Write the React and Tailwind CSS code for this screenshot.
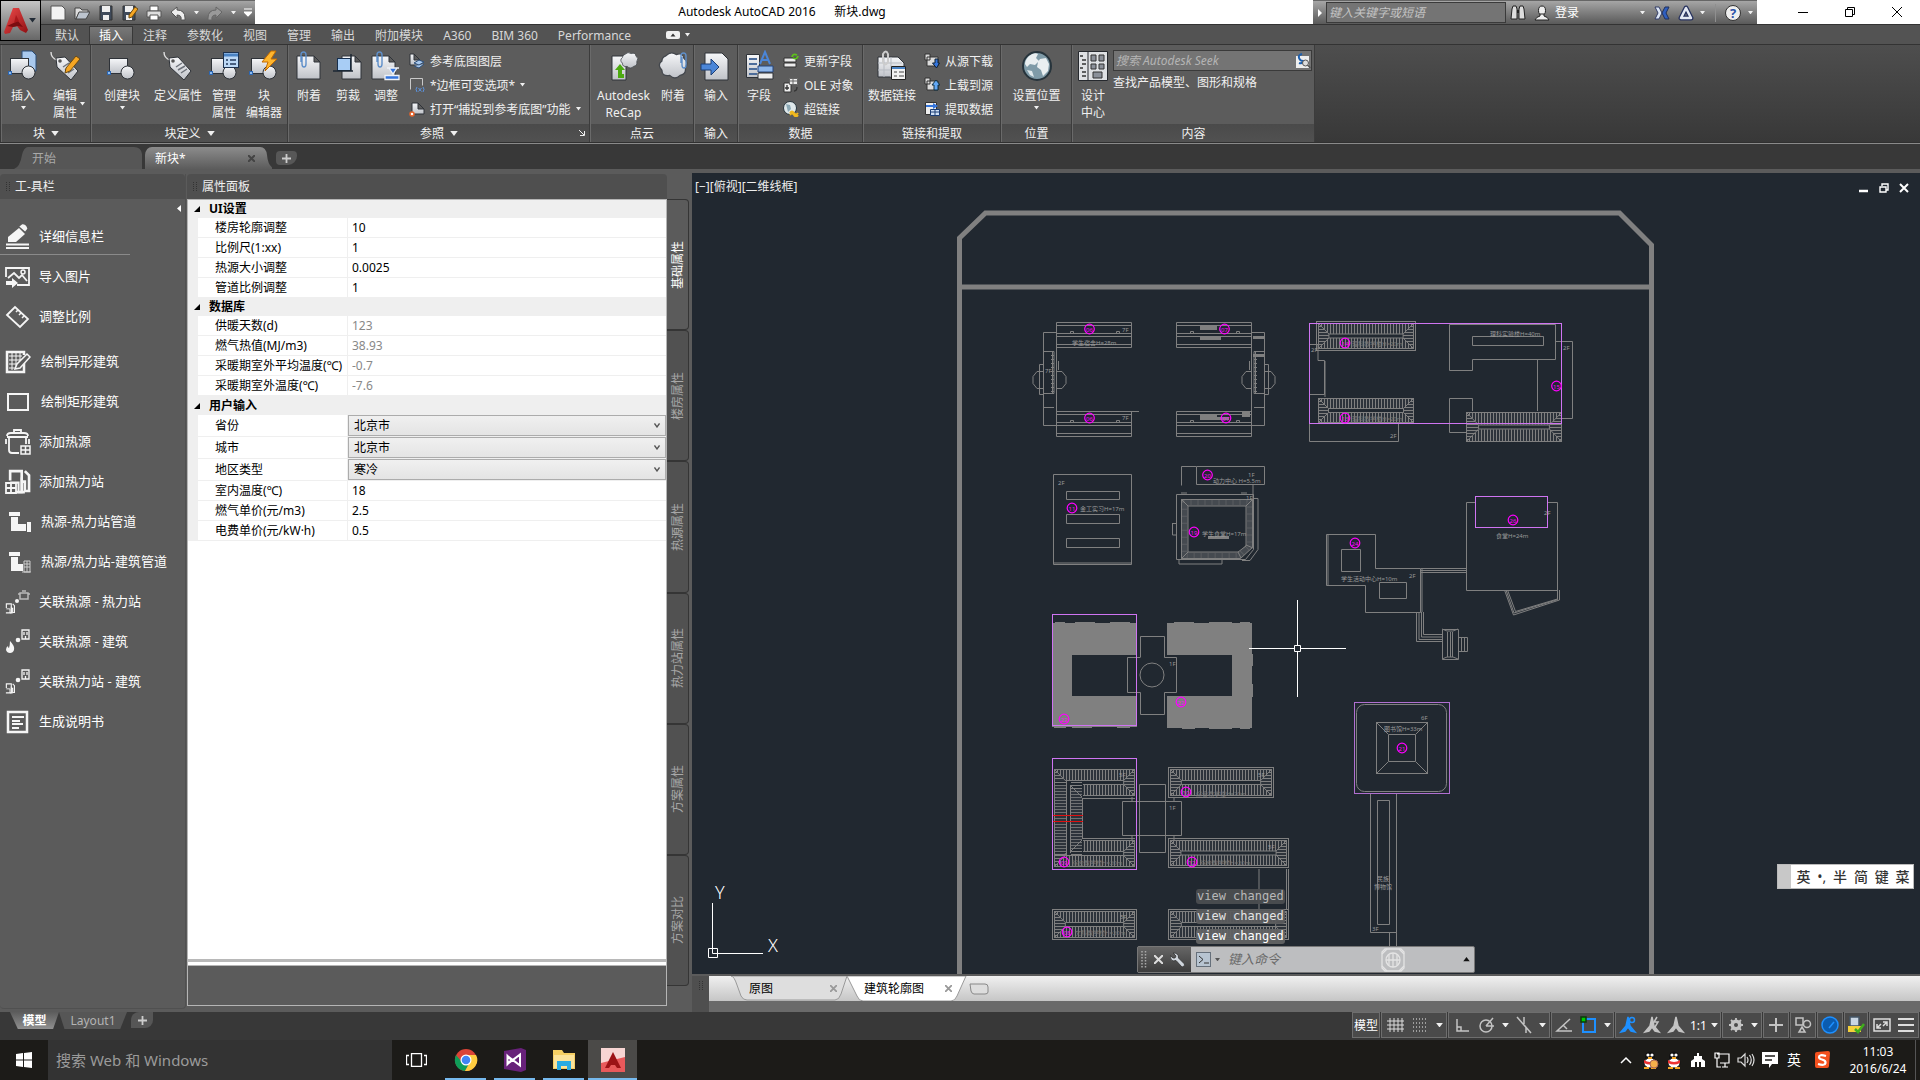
import React from "react";

/* ---------- small shared glyphs ---------- */
const Dn = ({ c = "#f0f0f0", w = 6 }) => (
  <svg width={w} height={w / 2 + 1} viewBox="0 0 6 4" className="shrink-0" aria-hidden="true">
    <path d="M0 0h6L3 4z" fill={c} />
  </svg>
);
const Svg = ({ s = 32, children, ...p }) => (
  <svg width={s} height={s} viewBox={`0 0 ${s} ${s}`} className="shrink-0" aria-hidden="true" {...p}>
    {children}
  </svg>
);
const PaleDefs = () => (
  <svg width="0" height="0" className="absolute" aria-hidden="true">
    <defs>
      <linearGradient id="pale" x1="0" y1="0" x2="0" y2="1">
        <stop offset="0" stopColor="#f6f7f9" />
        <stop offset="1" stopColor="#bfc2c8" />
      </linearGradient>
      <linearGradient id="red" x1="0" y1="0" x2="1" y2="1">
        <stop offset="0" stopColor="#ef4b4b" />
        <stop offset="1" stopColor="#8f0f12" />
      </linearGradient>
    </defs>
  </svg>
);
const Block = () => (
  <g stroke="#2e3238">
    <rect x="3.500" y="8.500" width="18" height="15" fill="url(#pale)" />
    <circle cx="21.500" cy="22.500" r="6.500" fill="url(#pale)" />
    <rect x="1.500" y="21.500" width="3" height="3" fill="#8dbbee" stroke="#2d66b0" />
  </g>
);
const Sheet = ({ x = 4, y = 6, w = 23, h = 23 }) => (
  <path
    d={`M${x} ${y}h${w - 6}l6 6v${h - 6}h${-w}z M${x + w - 6} ${y}v6h6`}
    fill="url(#pale)" stroke="#2e3238"
  />
);
const Clip = ({ x = 9, y = 2 }) => (
  <path
    d={`M${x} ${y + 4}v8q0 3 2 3t2-3V${y + 3}q0-3-2.500-3T${x - 1} ${y + 3}v7`}
    fill="none" stroke="#5f8fc9" strokeWidth="1.400"
  />
);
const Tag = () => (
  <g>
    <path d="M2 2q0 6 6 8" stroke="#ddd" fill="none" strokeWidth="1.400" />
    <path d="M7 8l9-1 13 14-7 9L8 17z" fill="url(#pale)" stroke="#2e3238" />
    <circle cx="11" cy="11" r="1.800" fill="#555" />
    <path d="M14 17l6-4M16 20l7-4M19 23l6-4" stroke="#6d727a" strokeWidth="1.500" />
  </g>
);
const Cloud = ({ x = 0, y = 0, k = 1 }) => (
  <path
    transform={`translate(${x} ${y}) scale(${k})`}
    d="M6 3q4-4 8-1q5-2 6 3q4 3 1 7q1 5-4 6q-4 4-8 0q-6 1-6-4q-4-4 0-7q0-3 3-4z"
    fill="url(#pale)" stroke="#43474d"
  />
);
const BI = {
  insert: <><path d="M15 1h10l4 4v16H15z" fill="#a9c9ee" stroke="#2d4e78" /><Block /></>,
  editAttr: <><Tag /><path d="M17 18l10-12 4 3-10 12-5 2z" fill="#f6a623" stroke="#6b4a10" /></>,
  create: <Block />,
  define: <Tag />,
  manage: <><Block /><rect x="15.500" y="2.500" width="15" height="15" fill="#bcd8f5" stroke="#1e3350" /><path d="M16 5h14" stroke="#4a83c4" strokeWidth="3" /><path d="M18 10h2M18 14h2M22 10h6M22 14h6" stroke="#22375a" strokeWidth="1.500" /></>,
  blockEd: <><Block /><path d="M23 1l-9 11h6l-3 9 12-12h-6l5-8z" fill="#ffb62e" stroke="#c26a00" /></>,
  attach: <><Sheet /><Clip /></>,
  cut: <><Sheet x={10} w={19} /><rect x="5.500" y="8.500" width="13" height="12" fill="#a8cdf5" stroke="#17304f" /><path d="M1 21h20M19 4v17" stroke="#1c2733" strokeWidth="1.500" /></>,
  adjust: <><Sheet x={2} /><Clip x={8} /><path d="M17 18h12M19 18h8l-4 6zM15 25.500h14v4H15z" fill="#3475dd" stroke="#eef2f8" strokeWidth="1.300" /></>,
  recap: <><path d="M4 6h14v24H4z" fill="url(#pale)" stroke="#2e3238" /><Cloud x={12} y={2} k={0.8} /><path d="M16 28h-6V20H7l5-6 5 6h-3v4h2z" fill="#4caa12" /></>,
  cloud: <><Cloud x={1} y={2} k={1.3} /><Clip x={25} y={3} /></>,
  imp: <><path d="M5 3h17l6 6v21H5z" fill="url(#pale)" stroke="#2e3238" /><path d="M1 14h10v-5l8 8-8 8v-5H1z" fill="#4b86d8" stroke="#1c3e74" /></>,
  field: <><path d="M3.500 4.500h13v23h-13z" fill="url(#pale)" stroke="#2e3238" /><path d="M6 9h8M6 14h8M6 19h8M6 24h8" stroke="#4d6d9b" strokeWidth="2" /><path d="M17 14l5-12 5 12M19 10h6" stroke="#4b86d8" fill="none" strokeWidth="2" /><path d="M15 16h15v6H15z" fill="#8db6ea" stroke="#24457c" /><path d="M15 23h15v6H15z" fill="#eee" stroke="#2e3238" /></>,
  link: <><path d="M2 7h20l6 6v14H2z" fill="url(#pale)" stroke="#2e3238" /><path d="M2 13h24M2 20h24M8 7v20M15 7v20" stroke="#b7bbc2" /><path d="M7 4q3-5 5 0v8q-3 5-5 0z" fill="none" stroke="#ccc" strokeWidth="2" /><path d="M15.500 16.500h14v13h-14z" fill="#f2f2f2" stroke="#222" /><path d="M16 18h13" stroke="#4a83c4" strokeWidth="2" /><path d="M18 22h3M18 26h3M23 22h5M23 26h5" stroke="#444" /></>,
  globe: <><circle cx="16" cy="16" r="14" fill="#7f9ba8" stroke="#27343c" strokeWidth="2" /><path d="M8 6q5-4 9-2l-2 4 3 3-4 4-5-1-3 3-2-3q0-4 4-8zM19 9l6-1 3 6-1 7-5 5-2-6-4-3 1-5z" fill="#e9eff1" /><path d="M6 20l5 1 2 6-4-2z" fill="#dfe8eb" /></>,
  design: <><path d="M1.500 1.500h29v29h-29z" fill="#dfe1e4" stroke="#26292e" /><path d="M11 2v28" stroke="#26292e" /><path d="M3 6h3M5 10h4M5 14h4M3 18h3M5 22h4M5 26h4" stroke="#333" strokeWidth="1.500" /><path d="M14 5h5v6h-5zM22 5h5v6h-5zM14 14h5v5h-5zM22 14h5v5h-5zM16 22h9v6h-9z" fill="#8b9099" stroke="#333" /></>,
};
const SI = {
  layers: <><Sheet x={1} y={1} w={10} h={11} /><path d="M5 10l5-3 5 2-5 3zM5 13l5 2 5-4" fill="#a9c9ee" stroke="#2d4e78" /></>,
  frame: <><path d="M1.500 12.500v-11h12v7" fill="none" stroke="#c9c9c9" /><path d="M8 10q-2 2 0 5M14 10q2 2 0 5M9.500 11l3 3.500M12.500 11l-3 3.500" fill="none" stroke="#5b93e0" /></>,
  snap: <><Sheet x={3} y={2} w={12} h={11} /><circle cx="3" cy="13" r="2" fill="#fff" stroke="#e8632a" strokeWidth="1.500" /></>,
  update: <><path d="M1 5h12v4H1zM1 10h12v4H1z" fill="#ececec" stroke="#333" /><path d="M9 4q1-4 5-2M15 3q-1 4-5 2" stroke="#5cc21a" fill="none" strokeWidth="1.800" /></>,
  ole: <><path d="M1 6h7v9H1z" fill="#eee" stroke="#333" /><path d="M6.500 1.500h8v6h-8zM6.500 4h8M10 2v5" fill="#eee" stroke="#666" /><path d="M4 8v5M2 11h4M11 14q3 0 3-4" stroke="#333" fill="none" strokeWidth="1.300" /></>,
  hyper: <><circle cx="7" cy="7" r="6.500" fill="#dfe8eb" stroke="#27343c" /><path d="M3 3l4 1 1 4-3 3z" fill="#8ba8b5" /><path d="M7 12q2-3 4 0t4 0M7 14q2-3 4 0t4 0" stroke="#f0b81e" fill="none" strokeWidth="1.800" /></>,
  down: <><path d="M1 1h5v6H1zM3 4h11v9H3z" fill="#dcdcdc" stroke="#333" /><path d="M11 6v4H8.500l4 5 3-5H14V6z" fill="#3475dd" stroke="#123" /></>,
  up: <><path d="M1 1h5v6H1zM3 4h11v9H3z" fill="#dcdcdc" stroke="#333" /><path d="M10 13V8H8l4-5 4 5h-2v5z" fill="#62a8f5" stroke="#134" /></>,
  extract: <><path d="M1.500 1.500h11v12h-11z" fill="#eee" stroke="#333" /><path d="M6.500 8.500h9v6h-9zM6.500 11h9M11 9v6" fill="#cfe0f5" stroke="#1c3e74" /><path d="M2 4h7v-2l5 3-5 3v-2H2" fill="#3475dd" /></>,
};

/* ---------- ribbon ---------- */
const Big = ({ i, l1, l2, dd, w }) => (
  <button className={`flex flex-col items-center pt-[5px] ${w} relative shrink-0`}>
    <Svg>{BI[i]}</Svg>
    <span className="mt-[5px] leading-[17px] whitespace-nowrap text-center">
      {l1}
      {l2 && <><br />{l2}</>}
    </span>
    {dd && !l2 && <span className="mt-[2px]"><Dn w={5} /></span>}
    {dd && l2 && <span className="absolute right-[1px] top-[57px]"><Dn w={5} /></span>}
  </button>
);
const Small = ({ i, t, dd }) => (
  <button className="flex h-[24px] items-center gap-[5px] whitespace-nowrap">
    <Svg s={16}>{SI[i]}</Svg>{t}{dd && <Dn w={5} />}
  </button>
);
const Group = ({ name, dd, launch, w, children }) => (
  <section className={`flex flex-col border-r border-[#3c3c3c] border-l border-l-[#6a6a6a] bg-[#5c5c5c] ${w} shrink-0`}>
    <div className="flex flex-1 items-start">{children}</div>
    <div className="relative flex h-[18px] items-center justify-center gap-[6px] bg-linear-to-b from-[#4a4a4a] to-[#515151]">
      {name}{dd && <Dn w={8} />}
      {launch && (
        <svg width="6" height="6" viewBox="0 0 6 6" className="absolute right-[4px] top-[6px]"><path d="M0 0l5 5M5.500 1v4.500H1" stroke="#eee" fill="none" /></svg>
      )}
    </div>
  </section>
);
const Ribbon = () => (
  <div className="h-[99px] shrink-0 border-b border-[#8a8a8a] text-[12px] leading-[17px] text-[#f0f0f0]">
    <div className="flex h-full border-b border-[#303030] bg-linear-to-b from-[#4e4e4e] to-[#383838] pl-[1px]">
      <Group name="块" dd w="w-[90px]">
        <Big i="insert" l1="插入" dd w="w-[42px]" /><Big i="editAttr" l1="编辑" l2="属性" dd w="w-[42px]" />
      </Group>
      <Group name="块定义" dd w="w-[197px]">
        <Big i="create" l1="创建块" dd w="w-[60px]" /><Big i="define" l1="定义属性" w="w-[52px]" />
        <Big i="manage" l1="管理" l2="属性" w="w-[40px]" /><Big i="blockEd" l1="块" l2="编辑器" w="w-[40px]" />
      </Group>
      <Group name="参照" dd launch w="w-[302px]">
        <Big i="attach" l1="附着" w="w-[40px]" /><Big i="cut" l1="剪裁" w="w-[38px]" /><Big i="adjust" l1="调整" w="w-[38px]" />
        <div className="flex flex-col pt-[4px] pl-[4px]">
          <Small i="layers" t="参考底图图层" />
          <Small i="frame" t="*边框可变选项*" dd />
          <Small i="snap" t="打开“捕捉到参考底图”功能" dd />
        </div>
      </Group>
      <Group name="点云" w="w-[104px]">
        <Big i="recap" l1="Autodesk" l2="ReCap" w="w-[65px]" /><Big i="cloud" l1="附着" w="w-[34px]" />
      </Group>
      <Group name="输入" w="w-[44px]"><Big i="imp" l1="输入" w="w-[42px]" /></Group>
      <Group name="数据" w="w-[125px]">
        <Big i="field" l1="字段" w="w-[40px]" />
        <div className="flex flex-col pt-[4px] pl-[4px]">
          <Small i="update" t="更新字段" /><Small i="ole" t="OLE 对象" /><Small i="hyper" t="超链接" />
        </div>
      </Group>
      <Group name="链接和提取" w="w-[138px]">
        <Big i="link" l1="数据链接" w="w-[56px]" />
        <div className="flex flex-col pt-[4px] pl-[4px]">
          <Small i="down" t="从源下载" /><Small i="up" t="上载到源" /><Small i="extract" t="提取数据" />
        </div>
      </Group>
      <Group name="位置" w="w-[71px]"><Big i="globe" l1="设置位置" dd w="w-[69px]" /></Group>
      <Group name="内容" w="w-[243px]">
        <Big i="design" l1="设计" l2="中心" w="w-[40px]" />
        <div className="flex flex-1 flex-col gap-[3px] pt-[5px] pr-[2px]">
          <label className="flex h-[21px] items-center border border-[#3a3a3a] bg-[#747474]">
            <input aria-label="搜索 Autodesk Seek" placeholder="搜索 Autodesk Seek" className="min-w-0 flex-1 bg-transparent px-[2px] italic outline-none placeholder:text-[#b4b4b4]" />
            <Svg s={16}><path d="M1 3h13v12H1z" fill="#eee" /><path d="M7 1q-4 1-3 4t4 3q-1 3-4 2" stroke="#1d5fae" strokeWidth="2" fill="none" /><circle cx="10.500" cy="10" r="3" fill="#ddd" stroke="#555" /><path d="M12.500 12l3 3" stroke="#555" strokeWidth="1.500" /></Svg>
          </label>
          <span className="whitespace-nowrap">查找产品模型、图形和规格</span>
        </div>
      </Group>
    </div>
  </div>
);

/* ---------- title bar ---------- */
const Title = () => (
  <header className="flex h-[24px] shrink-0 items-stretch justify-between bg-white text-[12px] leading-[17px]">
    <div className="flex w-[255px] items-center gap-[8px] border-t border-[#666] bg-linear-to-b from-[#a6a6a6] to-[#5a5a5a] pl-[50px]">
      <Svg s={16}><path d="M1 1h11l3 3v11H1z" fill="#f2f2f2" stroke="#555" /></Svg>
      <Svg s={16}><path d="M1 3h5l2 2h6v3H5l-3 6H1z" fill="#ddd" stroke="#444" /><path d="M2 14l3-7h11l-4 7z" fill="#bcc4ce" stroke="#444" /></Svg>
      <Svg s={16}><path d="M2 1h12v14H2z" fill="#3f4a5a" stroke="#333" /><path d="M4 1h8v6H4zM5 10h6v5H5z" fill="#eee" /></Svg>
      <Svg s={16}><path d="M1 1h12v14H1z" fill="#3f4a5a" stroke="#333" /><path d="M3 1h8v6H3zM4 10h6v5H4z" fill="#eee" /><path d="M7 10l6-8 3 2-6 8-3 1z" fill="#f6a623" stroke="#6b4a10" /></Svg>
      <Svg s={16}><path d="M4 1h8v5H4z" fill="#fff" stroke="#555" /><path d="M1 6h14v6H1z" fill="#ddd" stroke="#555" /><path d="M4 10h8v5H4z" fill="#fff" stroke="#555" /></Svg>
      <Svg s={16}><path d="M1 7l6-5v3q8 0 8 8v2h-4q1-5-4-5v3z" fill="#eee" stroke="#555" /></Svg>
      <Dn w={5} />
      <Svg s={16}><path d="M15 7l-6-5v3q-8 0-8 8v2h4q-1-5 4-5v3z" fill="#999" stroke="#666" /></Svg>
      <Dn w={5} />
      <svg width="8" height="9" viewBox="0 0 8 9"><path d="M0 1h8M0 4h8L4 8z" fill="#fff" stroke="#fff" strokeWidth="1.200" /></svg>
    </div>
    <h1 className="pt-[3px] pr-[4px] font-normal text-black whitespace-pre">Autodesk AutoCAD 2016      新块.dwg</h1>
    <div className="flex">
      <div className="flex w-[444px] items-center border-t border-[#666] bg-linear-to-b from-[#a6a6a6] to-[#5a5a5a] text-white">
        <svg width="13" height="10" viewBox="0 0 13 10"><path d="M5 1v8l4-4z" fill="#fff" /></svg>
        <input aria-label="键入关键字或短语" placeholder="键入关键字或短语" className="h-[21px] w-[180px] border border-[#3a3a3a] bg-[#747474] px-[2px] italic outline-none placeholder:text-[#c4c4c4]" />
        <Svg s={16} className="ml-[4px]"><path d="M2 4l1-3h3l1 3v10H1zM9 4l1-3h3l1 3 1 10H9z" fill="#ddd" stroke="#222" /><path d="M7 5h2v3H7z" fill="#222" /></Svg>
        <Svg s={16} className="ml-[8px]"><ellipse cx="8" cy="5.500" rx="3.500" ry="4.500" fill="#eee" stroke="#222" /><path d="M1 15q1-3 5-4V9h4v2q4 1 5 4z" fill="#eee" stroke="#222" /></Svg>
        <button className="ml-[5px] flex w-[90px] items-center justify-between"><span>登录</span><Dn w={5} /></button>
        <Svg s={16} className="ml-[9px]"><path d="M1 2h4l3 6-3 6H1l3-6z" fill="#dde6f5" stroke="#333d66" /><path d="M15 2h-4L8 8l3 6h4l-3-6z" fill="#2f5fc0" stroke="#22305a" /></Svg>
        <Svg s={16} className="ml-[8px]"><path d="M8 3L3 13h10z" fill="none" stroke="#26315e" strokeWidth="5" strokeLinejoin="round" /><path d="M8 3L3 13h10z" fill="none" stroke="#e3e8f2" strokeWidth="2.500" strokeLinejoin="round" /></Svg>
        <span className="ml-[6px] flex"><Dn w={5} /></span>
        <span className="ml-[10px] h-[18px] w-px bg-[#8f8f8f]" />
        <Svg s={16} className="ml-[9px]"><circle cx="8" cy="8" r="7.500" fill="#eee" stroke="#333" /><text x="8" y="13" fontSize="13" fontWeight="bold" textAnchor="middle" fill="#2a52a8">?</text></Svg>
        <span className="ml-[7px] flex"><Dn w={5} /></span>
      </div>
      <div className="flex w-[163px] items-center justify-around pl-[22px]">
        <button aria-label="最小化"><Svg s={12}><path d="M1 6.500h10" stroke="#000" /></Svg></button>
        <button aria-label="还原"><Svg s={12}><path d="M1.500 3.500h7v7h-7zM3.500 3v-1.500h7v7H9" fill="none" stroke="#000" /></Svg></button>
        <button aria-label="关闭"><Svg s={12}><path d="M1 1l10 10M11 1L1 11" stroke="#000" /></Svg></button>
      </div>
    </div>
  </header>
);
const TABS = ["默认", "插入", "注释", "参数化", "视图", "管理", "输出", "附加模块", "A360", "BIM 360", "Performance"];
const RibbonTabs = () => (
  <nav className="flex h-[21px] shrink-0 items-end border-t border-b border-[#333] bg-[#535353] pl-[45px] text-[12px] leading-[17px] text-[#d8d8d8]">
    {TABS.map((t, i) => (
      <button key={t} className={i === 1 ? "h-[18px] border border-b-0 border-[#383838] bg-linear-to-b from-[#787878] to-[#606060] px-[9px] text-white" : "h-[18px] px-[10px]"}>{t}</button>
    ))}
    <button aria-label="最小化功能区" className="flex h-[18px] items-center gap-[5px] pl-[25px]">
      <svg width="14" height="8" viewBox="0 0 14 8"><rect width="14" height="8" rx="2" fill="#f0f0f0" /><path d="M4.500 5.500h5L7 2.500z" fill="#333" /></svg>
      <Dn w={5} />
    </button>
  </nav>
);
const AppButton = () => (
  <button aria-label="应用程序菜单" className="absolute left-0 top-0 flex h-[41px] w-[41px] items-center border border-black bg-linear-to-b from-[#c4c4c4] to-[#676767] pl-[3px]">
    <svg width="25" height="28" viewBox="0 0 25 28"><path d="M9 1h6l9 22-2 3-6-3-3-4-4 1-3 6-5 1-1-2z" fill="url(#red)" /><path d="M3 19l11-5 5 6-5-1-5 1z" fill="#7c0d10" /><path d="M12 8l3 6-5 2z" fill="#a9171b" /></svg>
    <Dn w={7} c="#222b36" />
  </button>
);

/* ---------- document tabs ---------- */
const DocTabs = () => (
  <div className="flex h-[25px] shrink-0 items-end bg-[#383838] pl-[14px] text-[12px] leading-[17px]">
    <button className="relative h-[22px] w-[131px] text-left text-[#a9a9a9]">
      <svg viewBox="0 0 131 22" preserveAspectRatio="none" className="absolute inset-0 h-full w-full"><path d="M0 22q6-2 8-14 2-8 6-8h106q7 0 8 7v15z" fill="#565656" /></svg>
      <span className="relative pl-[18px]">开始</span>
    </button>
    <div className="relative flex h-[22px] w-[127px] items-center justify-between text-white">
      <svg viewBox="0 0 127 22" preserveAspectRatio="none" className="absolute inset-0 h-full w-full">
        <defs><linearGradient id="tb" x1="0" y1="0" x2="0" y2="1"><stop offset="0" stopColor="#8c8c8c" /><stop offset="1" stopColor="#5c5c5c" /></linearGradient></defs>
        <path d="M-8 22q8-2 8-14 1-8 7-8h108q6 0 7 8 1 12 8 14z" fill="url(#tb)" />
      </svg>
      <button className="relative pl-[10px]">新块*</button>
      <button aria-label="关闭新块" className="relative mr-[17px]"><Svg s={7}><path d="M0 0l7 7M7 0L0 7" stroke="#444" strokeWidth="2" /></Svg></button>
    </div>
    <button aria-label="新图形" className="mb-[4px] ml-[4px] flex h-[14px] w-[21px] items-center justify-center rounded-br-[9px] rounded-tl-[4px] rounded-bl-[4px] rounded-tr-[4px] bg-[#575757]">
      <Svg s={9}><path d="M0 4.500h9M4.500 0v9" stroke="#ccc" strokeWidth="1.800" /></Svg>
    </button>
  </div>
);

/* ---------- left tool bar ---------- */
const W = "#f5f5f5";
const Pump = ({ x = 0, y = 0, k = 1 }) => (
  <g transform={`translate(${x} ${y}) scale(${k})`} fill="none" stroke={W} strokeWidth="2.500">
    <path d="M3 11V2h11v20M2 22h15" /><path d="M14 12h3v9h4V6l-4-4" /><path d="M14 8v14h-3v-9H3" strokeWidth="2" />
  </g>
);
const TOOLS = [
  ["详细信息栏", <><path d="M14 4l6 6-9 8H3v-5z" fill={W} /><path d="M15.500 2.500l2-1.500q3 0 4 3.500l-1.500 2z" fill={W} stroke={W} strokeWidth="1.500" /><path d="M1 20.500h23M1 24h23" stroke={W} strokeWidth="1.800" /></>],
  ["导入图片", <><path d="M1 13V4h23v17H12" fill="none" stroke={W} strokeWidth="1.800" /><path d="M3 14l6-5 5 5 3-3 5 6" fill="none" stroke={W} strokeWidth="1.800" /><circle cx="18" cy="8" r="2" fill="none" stroke={W} strokeWidth="1.500" /><path d="M1 17h6v-3l6 5-6 5v-3H1z" fill={W} /></>],
  ["调整比例", <><path d="M2 11l8-8 13 12-8 8z" fill="none" stroke={W} strokeWidth="1.800" /><path d="M13 6l-2 2M16 9l-2 2M19 12l-2 2" stroke={W} strokeWidth="1.500" /></>],
  ["绘制异形建筑", <><path d="M19 14v9H2V3h17v3" fill="none" stroke={W} strokeWidth="2.500" /><path d="M4 7h13M4 11h12M4 15h8M4 19h7M7 4v17M11 4v14M15 4v9" stroke={W} /><path d="M10 20l2-5L22 5l3 3-10 11z" fill="#5b5b5b" stroke={W} strokeWidth="1.500" /></>],
  ["绘制矩形建筑", <path d="M3 5h20v16H3z" fill="none" stroke={W} strokeWidth="2" />],
  ["添加热源", <><path d="M4 9v12q0 3 3 3h7M21 9v6M2 7q0-3 4-3h13q4 0 4 3M9 4V1h7v3M1 10v5M24 10v5M2 8h21" fill="none" stroke={W} strokeWidth="1.800" /><path d="M16 17h9v8h-9zM20.500 17v8M16 21h9" fill="none" stroke={W} strokeWidth="1.500" /></>],
  ["添加热力站", <><Pump x={2} y={0} k={1.05} /><path d="M1 14h10v10H1zM6 14v10M1 19h10" fill="#5b5b5b" stroke={W} strokeWidth="1.800" /></>],
  ["热源-热力站管道", <><path d="M4 3h11v4H4zM6 8h7v7h8v7H6zM22 13h4v10h-4z" fill={W} /></>],
  ["热源/热力站-建筑管道", <><path d="M4 3h11v4H4zM6 8h7v7h5v7H6z" fill={W} /><path d="M19 12h6v11h-6zM17 23h9M19 15h6M19 18h6M22 12v11" fill="none" stroke="#ccc" /></>],
  ["关联热源 - 热力站", <><path d="M15 4h8v6h-8zM17 2h4M13 5h2M23 5h2" fill="none" stroke="#bbb" strokeWidth="1.500" /><circle cx="12" cy="12" r="2" fill={W} /><Pump x={0} y={14} k={0.45} /></>],
  ["关联热源 - 建筑", <><path d="M17 1h7v9h-7zM19 3v3M22 3v3M20.500 7v3" fill="none" stroke={W} strokeWidth="1.300" /><circle cx="13" cy="11" r="2.300" fill={W} /><path d="M5 12q5 5 4 9-1 3-4 3t-4-3q0-3 2-4 0 2 1 2 1-3 1-7z" fill={W} /></>],
  ["关联热力站 - 建筑", <><path d="M17 1h7v9h-7zM19 3v3M22 3v3M20.500 7v3" fill="none" stroke={W} strokeWidth="1.300" /><circle cx="13" cy="11" r="2.300" fill={W} /><Pump x={0} y={14} k={0.45} /></>],
  ["生成说明书", <><path d="M3 3h19v20H3z" fill="none" stroke={W} strokeWidth="2.500" /><path d="M7 8h12M7 12h8M7 15h11M7 19h7" stroke={W} strokeWidth="1.800" /></>],
];
const Grip = () => (
  <svg width="4" height="10" viewBox="0 0 4 10" className="shrink-0"><path d="M.5 0v10M3.500 0v10" stroke="#333" strokeDasharray="1 1" /></svg>
);
const ToolPanel = () => (
  <aside className="mt-[5px] mb-[3px] flex w-[186px] shrink-0 flex-col rounded-b-[4px] border-b border-r border-[#505050]">
    <h2 className="flex h-[25px] items-center gap-[5px] rounded-t-[4px] bg-[#4f4f4f] pl-[6px] text-[12px] text-[#f0f0f0]"><Grip />工-具栏</h2>
    <div className="flex h-[18px] items-center justify-end pr-[4px]"><svg width="4" height="7" viewBox="0 0 4 7"><path d="M4 0v7L0 3.500z" fill="#fff" /></svg></div>
    {TOOLS.map(([t, g], i) => (
      <React.Fragment key={t}>
        {i === 3 && <div className="h-[5px]" />}
        <button className={`flex h-[40px] items-center pl-[5px] text-[13px] text-white whitespace-nowrap ${i === 3 || i === 4 || i === 7 || i === 8 ? "gap-[10px]" : "gap-[8px]"}`}>
          <Svg s={26}>{g}</Svg>{t}
        </button>
        {i === 0 && <div className="-mb-px -mt-[3px] mb-[2px] h-px w-[130px] bg-[#8a8a8a]" />}
      </React.Fragment>
    ))}
  </aside>
);

/* ---------- property panel ---------- */
const PROPS = [
  ["UI设置", [["楼房轮廓调整", "10"], ["比例尺(1:xx)", "1"], ["热源大小调整", "0.0025"], ["管道比例调整", "1"]]],
  ["数据库", [["供暖天数(d)", "123"], ["燃气热值(MJ/m3)", "38.93"], ["采暖期室外平均温度(℃)", "-0.7"], ["采暖期室外温度(℃)", "-7.6"]], true],
  ["用户输入", [["省份", "北京市", 1], ["城市", "北京市", 1], ["地区类型", "寒冷", 1], ["室内温度(℃)", "18"], ["燃气单价(元/m3)", "2.5"], ["电费单价(元/kW·h)", "0.5"]]],
];
const PropPanel = () => (
  <section className="mt-[5px] mb-[6px] flex w-[481px] shrink-0 flex-col pl-px">
    <h2 className="flex h-[25px] items-center gap-[5px] rounded-t-[4px] bg-[#4f4f4f] pl-[6px] text-[12px] text-[#f0f0f0]"><Grip />属性面板</h2>
    <div className="flex flex-1 flex-col border border-[#b5b5b5] bg-white">
      <div className="flex flex-col text-[12px] leading-[18px] text-black">
        {PROPS.map(([g, rows, ro], gi) => (
          <div key={g} className="bg-[#efefef]">
            <h3 className={`flex items-center gap-[9px] pl-[6px] font-bold ${gi === 2 ? "h-[19px]" : "h-[18px]"}`}>
              <svg width="6" height="6" viewBox="0 0 6 6"><path d="M6 0v6H0z" fill="#000" /></svg>{g}
            </h3>
            <div className="pl-[10px]">
              {rows.map(([k, v, sel]) => (
                <div key={k} className={`flex border-b border-[#efefef] bg-white ${sel ? "h-[22px]" : "h-[20px]"}`}>
                  <label htmlFor={k} className="flex w-[150px] items-center border-r border-[#efefef] pl-[17px] whitespace-nowrap">{k}</label>
                  {sel ? (
                    <div className="relative flex flex-1 items-center">
                      <select id={k} className="h-[21px] w-full appearance-none border border-[#acacac] bg-linear-to-b from-[#f0f0f0] to-[#e4e4e4] pl-[5px] leading-[18px]"><option>{v}</option></select>
                      <svg width="6" height="5" viewBox="0 0 6 5" className="absolute right-[6px]"><path d="M.5 .5L3 4 5.500 .5" fill="none" stroke="#555" strokeWidth="1.300" /></svg>
                    </div>
                  ) : (
                    <input id={k} defaultValue={v} readOnly={ro} className={`min-w-0 flex-1 bg-transparent pl-[4px] outline-none ${ro ? "text-[#888]" : "text-black"}`} />
                  )}
                </div>
              ))}
            </div>
          </div>
        ))}
      </div>
      <div className="flex-1" />
      <div className="h-[3px] bg-[#b8b8b8]" />
      <div className="h-[3px] bg-white" />
      <div className="h-[40px] border-t border-[#b5b5b5] bg-[#5b5b5b]" />
    </div>
  </section>
);
const VTABS = ["基础属性", "楼房属性", "热源属性", "热力站属性", "方案属性", "方案对比"];
const VTabs = () => (
  <div className="mt-[30px] mb-[26px] flex w-[22px] shrink-0 flex-col">
    {VTABS.map((t, i) => (
      <button key={t} className={`flex flex-1 items-center justify-center rounded-r-[4px] border border-l-0 border-[#353535] text-[12px] leading-[20px] ${i ? "bg-[#515151] text-[#a8a8a8]" : "bg-[#5b5b5b] text-white"}`}>
        <span className="rotate-180 [text-orientation:sideways] [writing-mode:vertical-rl]">{t}</span>
      </button>
    ))}
  </div>
);

/* ---------- drawing ---------- */
const G = "#808080";
const range = (a, b, s) => { const r = []; for (let v = a; v < b; v += s) r.push(v); return r; };
/* hipped roof seen from above, with its rafters */
const Roof = ({ x, y, w, h, frame = true }) => {
  const r = h * 0.42, my = y + h / 2;
  const d = [];
  range(x + 3, x + w - 1, 3).forEach((v) => {
    const k = Math.min(v - x, x + w - v, r);
    d.push(`M${v + 0.5} ${y}V${y + k}M${v + 0.5} ${y + h}V${y + h - k}`);
  });
  range(y + 3, y + h - 1, 3).forEach((v) => {
    const k = Math.min(v - y, y + h - v, r);
    d.push(`M${x} ${v + 0.5}H${x + k}M${x + w} ${v + 0.5}H${x + w - k}`);
  });
  return (
    <g>
      {frame && <rect x={x - 1.5} y={y - 1.5} width={w + 3} height={h + 3} />}
      <rect x={x + 0.5} y={y + 0.5} width={w - 1} height={h - 1} fill="#4a5055" fillOpacity="0.300" />
      <rect x={x + r} y={my - 2} width={w - 2 * r} height="4" fill="#212830" stroke="none" />
      <path d={d.join("")} />
      <path d={`M${x} ${y}L${x + r} ${my - 2}H${x + w - r}L${x + w} ${y}M${x} ${y + h}L${x + r} ${my + 2}H${x + w - r}L${x + w} ${y + h}M${x + r} ${my - 2}v4M${x + w - r} ${my - 2}v4`} />
    </g>
  );
};
const Mark = ({ x, y, n }) => (
  <g stroke="#f0f" strokeWidth="1.200"><circle cx={x} cy={y} r="4.800" /><text x={x} y={y + 2.5} fontSize="6" textAnchor="middle" fill="#f0f" stroke="none">{n}</text></g>
);
const T = ({ x, y, c = "#9a9a9a", children }) => <text x={x} y={y + 2.5} fontSize="6" fill={c} stroke="none">{children}</text>;
const Bar = ({ x, y }) => (
  <path d={`M${x} ${y}h75v25h-75zM${x} ${y + 3}h75M${x} ${y + 11}h75M${x} ${y + 14}h75M${x} ${y + 22}h75M${x + 14} ${y + 11}v-2h3v2M${x + 60} ${y + 11}v-2h3v2`} />
);
const Wing = () => (
  <g>
    <path d="M1056 332.500h-12.500v93h12.500M1056.500 346v66M1044 351.500h10v42h-10M1044 407.500h10M1052.500 351v42" />
    <path d="M1043 364.500h-3.500v30h3.500M1043 371.500h-6l-4 5v7l4 5h6M1057 371.500h5l4 5v7l-4 5h-5M1058.500 361v9" />
    <path d="M1052.500 351v42" strokeWidth="3" strokeDasharray="1 3" />
  </g>
);
const Plan = () => (
  <svg viewBox="692 173 1228 801" preserveAspectRatio="xMinYMin slice" className="absolute inset-0 h-full w-full" fill="none" stroke={G} strokeWidth="1">
    <path d="M959.500 976V238l26-25h634l32 32v731M961 287h690" strokeWidth="5" />
    {/* dormitories */}
    <Bar x={1056.5} y={322.5} /><Bar x={1176.5} y={322.5} /><Bar x={1056.5} y={411.5} /><Bar x={1176.5} y={411.5} />
    <Wing /><g transform="matrix(-1 0 0 1 2308 0)"><Wing /></g>
    <path d="M1131 411.500h8" />
    <path d="M1200 326h17v4h-17zM1200 337h21v3h-21zM1200 415h17v5h-17zM1217 417h12v3h-12zM1242 412h8v5h-8zM1253 336h11v3h-11zM1253 354h11v3h-11z" fill={G} stroke="none" />
    <Mark x={1089.5} y={329} n="06" /><Mark x={1224.5} y={329} n="07" /><Mark x={1089.5} y={418} n="06" /><Mark x={1226} y={418} n="07" />
    <T x={1122} y={329}>7F</T><T x={1122} y={417}>7F</T><T x={1045} y={370}>7F</T><T x={1072} y={342}>学生宿舍H=28m</T>
    {/* teaching complex */}
    <Roof x={1318} y={323} w={96} h={26} /><Roof x={1318} y={398} w={96} h={25} frame={false} /><Roof x={1466} y={412} w={96} h={30} frame={false} />
    <path d="M1309 344.500h9v16h6.500v34h-15M1325 361v36M1309.500 423v18.500h89V423M1449.500 370.500v-46h106v35h-83v11zM1472.500 336.500h71v9h-71zM1556 341.500h16.500v77H1562M1537.500 360v51M1472.500 411v-12.500h-23v34h17" />
    <T x={1311} y={349}>2F</T><T x={1390} y={435}>2F</T><T x={1563} y={347}>2F</T><T x={1490} y={333}>理科实验楼H=40m</T>
    <T x={1352} y={343} c="#777">理科教学楼H=20m</T><T x={1352} y={418} c="#777">理科教学楼H=20m</T>
    <rect x="1309.500" y="323.500" width="252" height="100" stroke="#cf74f2" />
    <Mark x={1345} y={343} n="14" /><Mark x={1345} y={418} n="13" /><Mark x={1556.500} y={386} n="15" />
    {/* workshop */}
    <path d="M1053.500 474.500h78v90h-78zM1053 563h79M1066.500 491.500h53v8h-53zM1066.500 514.500h53v9h-53zM1066.500 538.500h53v9h-53z" />
    <T x={1058} y={482}>2F</T><T x={1080} y={508}>金工实习H=17m</T><Mark x={1072} y={508} n="11" />
    {/* student canteen */}
    <path d="M1196.500 466.500h68v18h-68zM1196 466.500h-14.500v19M1176.500 494.500h77v55l-8 10h-69zM1253 485v14M1172 523.500h4M1172.500 523v12h4M1254 498.500h4v51l-8 11h-8M1179 559v5h43v-5M1181 493h6M1241 493h6" />
    <path d="M1184.500 502.500h65v43l-10 10h-55z" strokeWidth="6" strokeOpacity="0.600" />
    <path d="M1184.500 502.500h65v43l-10 10h-55z" stroke="#454a50" strokeWidth="5" strokeDasharray="6 1" />
    <path d="M1181.500 499.500h71v48l-12 11h-59zM1188 506h58v40l-8 6h-50zM1181 499l7 7M1253 499l-7 7M1181 559l7-7M1241 558l-3-6M1253 548l-7-3" />
    <path d="M1208 536h21v3h-21z" fill={G} stroke="none" />
    <T x={1248} y={474}>1F</T><T x={1213} y={480}>动力中心 H=5.5m</T><T x={1202} y={533}>学生食堂H=17m</T><T x={1246} y={497}>1F</T>
    <Mark x={1207.5} y={475} n="20" /><Mark x={1194} y={532} n="19" />
    {/* canteen and activity centre */}
    <path d="M1475 502.500h-8.500v88h91v-88h-10M1504.500 590l9 25 46-15v-10M1507.500 590l8 21.500 42-12.500v-9M1506 590l8 23 44-13.500" />
    <rect x="1475.500" y="496.500" width="72" height="31" stroke="#cf74f2" />
    <T x={1496} y={535}>食堂H=24m</T><T x={1544} y={512}>2F</T><Mark x={1513} y={520} n="26" />
    <path d="M1326.500 534.500h49v34h45v44h-55v-27h-39zM1328 535v50M1422 568v44M1341.500 549.500h19v22h-19zM1379.500 582.500h27v16h-27zM1421 568.500h45M1421 570.500h45M1421 572.500h45M1416.500 612v29.500h26M1419 612v27.500h23M1421.500 612v25h21M1423.500 612v22.500h19M1442.500 629.500h16v30h-16zM1447.500 632v25M1450.500 632v25M1452.500 632v25M1442 629l5 2h6l5-2M1442 659l5-2h6l5 2M1458.500 637.500h9v14h-9zM1461.500 638v13M1464.500 638v13" />
    <T x={1341} y={578}>学生活动中心H=10m</T><T x={1409} y={575}>2F</T><Mark x={1355} y={543} n="24" />
    {/* library */}
    <rect x="1356.500" y="704.500" width="90" height="87" rx="8" />
    <path d="M1376.500 722.500h51v51h-51zM1388.500 734.500h27v27h-27zM1376 722l12 12M1428 722l-12 12M1376 774l12-12M1428 774l-12-12M1370.500 793v139.500h26V793M1377.500 800.500h12v124h-12zM1389.500 932v18M1396.500 932v18" />
    <rect x="1354.500" y="702.500" width="95" height="91" stroke="#b06fd0" />
    <T x={1384} y={728}>图书馆H=33m</T><T x={1421} y={717}>6F</T><Mark x={1402} y={748} n="21" />
    <T x={1377} y={878}>民族</T><T x={1374} y={886}>博物馆</T><T x={1372} y={928}>3F</T>
    {/* paired halls */}
    <path d="M1052 623h3v-1h10v1h10v-1h20v1h15v-1h20v1h7v32h-65v41h65v31h-7v1h-13v-1h-25v1h-20v-1h-6v1h-12v-1h-2z" fill={G} stroke="none" />
    <path d="M1167 623h7v-1h20v1h15v-1h23v1h8v-1h10v1h2v31h1v12h-1v18h1v13h-1v31h-2v1h-10v-1h-8v1h-23v-1h-14v1h-13v-1h-15v-32h65v-41h-65z" fill={G} stroke="none" />
    <path d="M1140.500 657v-20.500h24V657.500h12v35h-12v22h-24v-22h-13v-35h13" /><circle cx="1152" cy="675" r="12" />
    <T x={1169} y={663}>1F</T>
    <rect x="1052.500" y="614.500" width="84" height="111" stroke="#cf74f2" />
    <Mark x={1064} y={719} n="22" /><Mark x={1181} y={702} n="22" />
    {/* lower halls */}
    <Roof x={1054} y={769} w={81} h={27} frame={false} /><Roof x={1054} y={840} w={81} h={27} frame={false} />
    <rect x="1054" y="781" width="29" height="72" fill="#212830" stroke="none" />
    <path d={range(782.5, 855, 3).map((v) => `M1054 ${v}h12M1071 ${v}h11`).join("")} />
    <path d="M1054 785h12v67h-12zM1071 789h11v60h-11z" fill="#4a5055" fillOpacity="0.300" stroke="none" />
    <path d="M1054.500 769v98M1066.500 781v74M1070.500 785v68M1082.500 798v41M1083 798.500h52M1083 838.500h52M1070 785l12 12M1070 852l12-12" />
    <Roof x={1170} y={769} w={102} h={27} /><Roof x={1170} y={840} w={117} h={26} /><Roof x={1054} y={911} w={81} h={27} /><Roof x={1170} y={911} w={117} h={27} />
    <path d="M1139.500 784.500h26v68h-26zM1122.500 801.500h59v34h-59zM1259 869v40M1286.500 869v40M1288.500 869v40M1132 801v-4M1174 801v-4M1132 836v4M1174 836v4" />
    <path d="M1053 815.500h30M1053 821.500h30" stroke="#e01010" />
    <rect x="1052.500" y="758.500" width="84" height="111" stroke="#cf74f2" />
    <T x={1169} y={807}>1F</T><T x={1119} y={774}>5F</T><T x={1258} y={774}>5F</T><T x={1268} y={846}>5F</T><T x={1120} y={916}>5F</T>
    <T x={1196} y={793} c="#777">综合教学楼H=20m</T><T x={1072} y={862} c="#777">综合教学楼H=20m</T><T x={1200} y={862} c="#777">综合教学楼H=20m</T><T x={1075} y={932} c="#777">文科教学楼H=20m</T>
    <Mark x={1186} y={792} n="10" /><Mark x={1064} y={862} n="09" /><Mark x={1192} y={862} n="12" /><Mark x={1067} y={932} n="08" />
    {/* crosshair and axis marker */}
    <g stroke="#fff"><path d="M1249 648.500h45M1301 648.500h45M1297.500 600v45M1297.500 652v45M1294.500 645.500h6v6h-6z" /></g>
    <g stroke="#fff"><path d="M708.500 948.500h9v9h-9zM712.500 903v50.500H763" /></g>
    <text x="715" y="899" fontSize="18" fontWeight="300" fill="#fff" stroke="none">Y</text>
    <text x="768" y="952" fontSize="18" fontWeight="300" fill="#fff" stroke="none">X</text>
  </svg>
);
const MSG = ["text-[#b8b8b8] bg-[#4b4d50]/95", "text-[#e4e4e4] bg-[#5a5b5d]/95", "text-white bg-[#626364]/95"];
const CanvasArea = () => (
  <main className="mt-[4px] ml-[3px] flex min-w-0 flex-1 flex-col">
    <div className="relative flex-1 overflow-hidden bg-[#212830]">
      <Plan />
      <div className="relative flex items-start justify-between pt-[5px] pl-[3px] pr-[11px] text-[12px] leading-[17px] text-[#eee]">
        <span>[−][俯视][二维线框]</span>
        <span className="flex gap-[10px] pt-[5px]">
          <Svg s={10}><path d="M0 8h9" stroke="#fff" strokeWidth="2.500" /></Svg>
          <Svg s={10}><path d="M1 4h6v5H1zM3 3V1h6v6H7" fill="none" stroke="#fff" strokeWidth="1.400" /></Svg>
          <Svg s={10}><path d="M1 1l8 8M9 1L1 9" stroke="#fff" strokeWidth="2" /></Svg>
        </span>
      </div>
      <div className="absolute bottom-[30px] left-[504px] flex flex-col gap-[5px] font-['DejaVu_Sans_Mono',monospace] text-[12px] leading-[15px]">
        {MSG.map((c) => <span key={c} className={`rounded-[3px] px-[1px] ${c}`}>view changed</span>)}
      </div>
      <form className="absolute bottom-[1px] left-[445px] flex h-[27px] w-[338px] items-center rounded-[2px] border border-[#777] bg-[#bdbec0] text-[12px]" onSubmit={(e) => e.preventDefault()}>
        <div className="flex h-full w-[53px] items-center gap-[7px] bg-linear-to-b from-[#666] to-[#3c3c3c] pl-[3px]">
          <svg width="6" height="17" viewBox="0 0 6 17"><path d="M1 0v17M4.500 0v17" stroke="#aaa" strokeWidth="1.500" strokeDasharray="1.500 1.500" /></svg>
          <Svg s={9}><path d="M0 0l9 9M9 0L0 9" stroke="#ddd" strokeWidth="2" /></Svg>
          <Svg s={16}><path d="M3 1l3 3-1 2-2 0-2.500-2.500Q0 8 3 9l3-.5 6 6.500q3 0 2.500-3L8.500 6Q9 1 3 1z" fill="#cfd5dc" stroke="#333" strokeWidth="0.800" /></Svg>
        </div>
        <button type="button" aria-label="最近使用的命令" className="flex items-center gap-[4px] pl-[5px]">
          <Svg s={15}><rect x=".5" y=".5" width="14" height="14" fill="#b7c4d1" stroke="#66707b" /><path d="M3 4l4 3.500L3 11M8 11h5" stroke="#333" fill="none" /></Svg><Dn c="#555" w={5} />
        </button>
        <input aria-label="键入命令" placeholder="键入命令" className="ml-[8px] min-w-0 flex-1 bg-transparent text-[13px] italic outline-none placeholder:text-[#6a6a6a]" />
        <svg width="24" height="24" viewBox="0 0 24 24" className="absolute left-[243px]" fill="none" stroke="#e4e4e4" strokeWidth="1.300"><path d="M4 1h16l3 3v16l-3 3H4l-3-3V4z" /><circle cx="12" cy="12" r="7" /><path d="M5 12h14M12 5v14M8 7v10M16 7v10M1 6l5-5M18 1l5 5M1 18l5 5M18 23l5-5" /></svg>
        <span className="mr-[4px] rotate-180"><Dn c="#111" w={7} /></span>
      </form>
      <div className="absolute right-[6px] top-[691px] flex h-[25px] w-[137px] items-center border border-[#bbb] bg-white text-[14px] text-[#333]">
        <span className="h-full w-[13px] bg-[#c8c8c8]" />
        <span className="flex flex-1 items-center justify-around pl-[2px]"><b className="font-medium">英</b><span>•,</span><b className="font-medium">半</b><b className="font-medium">简</b><b className="font-medium">键</b><b className="font-medium">菜</b></span>
      </div>
    </div>
    <div className="mt-[2px] flex h-[36px] shrink-0">
      <div className="flex w-[17px] justify-center bg-[#4f4f4f] pt-[5px]"><Grip /></div>
      <div className="flex flex-1 flex-col bg-[#6a6a6a]">
        <div className="flex h-[25px] items-stretch bg-linear-to-b from-[#f0f0f0] to-[#c6c6c6] pl-[22px] text-[12px] leading-[17px] text-black">
          <div className="relative flex w-[116px] items-center justify-between pl-[18px] pr-[10px]">
            <svg viewBox="0 0 116 25" preserveAspectRatio="none" className="absolute inset-0 h-full w-full"><path d="M0 0q3 0 6 9l4 11q2 4 6 4h88q4 0 6-6l6-18z" fill="#dedede" stroke="#999" /></svg>
            <button className="relative">原图</button>
            <button aria-label="关闭原图" className="relative"><Svg s={7}><path d="M0 0l7 7M7 0L0 7" stroke="#999" strokeWidth="1.800" /></Svg></button>
          </div>
          <div className="relative flex w-[120px] items-center justify-between pl-[17px] pr-[15px]">
            <svg viewBox="0 0 120 25" preserveAspectRatio="none" className="absolute inset-0 h-full w-full"><path d="M0 0l10 20q2 5 6 5h88q4 0 6-5l9-20z" fill="#fff" stroke="#999" /></svg>
            <button className="relative">建筑轮廓图</button>
            <button aria-label="关闭建筑轮廓图" className="relative"><Svg s={7}><path d="M0 0l7 7M7 0L0 7" stroke="#999" strokeWidth="1.800" /></Svg></button>
          </div>
          <button aria-label="新建" className="pl-[2px]"><svg width="20" height="12" viewBox="0 0 20 12"><path d="M1 1h15q3 0 3 3v5q0 2-3 2H5Q3 11 2 8z" fill="#ddd" stroke="#888" /></svg></button>
        </div>
      </div>
    </div>
  </main>
);

/* ---------- status bar ---------- */
const S20 = ({ children, c = "#c4c4c4" }) => <svg width="20" height="20" viewBox="0 0 20 20" fill="none" stroke={c} strokeWidth="1.500" className="shrink-0">{children}</svg>;
const Cell = ({ w, children }) => <div className={`flex h-[26px] items-center justify-around border border-[#6e6e6e] bg-[#4a4a4a] ${w}`}>{children}</div>;
const Person = ({ c, extra }) => <S20 c={c}><path d="M10 2l2 9 5 6-4-1-3-4-3 4-4 1 5-6z" fill={c} />{extra}</S20>;
const Status = () => (
  <footer className="flex h-[28px] shrink-0 items-start justify-between bg-[#383838] text-[12px] leading-[17px] text-white">
    <div className="flex pl-[10px]">
      <button className="h-[17px] w-[49px] bg-linear-to-b from-[#5c5c5c] to-[#909090] font-bold [clip-path:polygon(0_0,100%_0,88%_100%,16%_100%)]">模型</button>
      <button className="h-[17px] w-[68px] bg-[#565656] text-[#b4b4b4] [clip-path:polygon(0_0,100%_0,90%_100%,8%_100%)]">Layout1</button>
      <button aria-label="新建布局" className="ml-[4px] flex h-[16px] w-[22px] items-center justify-center rounded-br-[8px] rounded-tl-[8px] bg-[#565656]"><Svg s={9}><path d="M0 4.500h9M4.500 0v9" stroke="#ccc" strokeWidth="1.800" /></Svg></button>
    </div>
    <div className="flex gap-px pr-[1px]">
      <Cell w="w-[28px]"><span className="whitespace-nowrap">模型</span></Cell>
      <Cell w="w-[66px]">
        <S20 c="#ddd"><path d="M5 3v14M9 3v14M13 3v14M17 3v14M2 6h17M2 10h17M2 14h17" strokeWidth="1" /></S20>
        <S20 c="#bbb"><path d="M3 4h15M3 8h15M3 12h15M3 16h15" strokeDasharray="1 2" /></S20><Dn w={7} />
      </Cell>
      <Cell w="w-[102px]">
        <S20><path d="M5 4v12h12M5 12h4v4" /></S20>
        <S20><circle cx="9" cy="11" r="6" /><path d="M9 11l7-8M9 11h8" /></S20><Dn w={7} />
        <S20><path d="M3 2l14 16M10 2v7M12 12v6" /></S20><Dn w={7} />
      </Cell>
      <Cell w="w-[63px]">
        <S20><path d="M16 4L3 16h15M9 10l4 4" /></S20>
        <S20 c="#1e90ff"><path d="M4 4h12v13H4z" strokeWidth="2" /><path d="M2 2h5v5H2z" fill="#0c0" stroke="#0a3a0a" /></S20><Dn w={7} />
      </Cell>
      <Cell w="w-[106px]">
        <Person c="#1e90ff" extra={<circle cx="14" cy="5" r="2.500" />} />
        <Person c="#c4c4c4" extra={<path d="M15 2l-3 5h4l-3 5" />} />
        <Person c="#c4c4c4" />
        <span>1:1</span><Dn w={7} />
      </Cell>
      <Cell w="w-[40px]"><S20><circle cx="10" cy="10" r="4" strokeWidth="3" /><path d="M10 3v14M3 10h14M5 5l10 10M15 5L5 15" strokeWidth="1.800" /><circle cx="10" cy="10" r="2" fill="#4a4a4a" stroke="none" /></S20><Dn w={7} /></Cell>
      <Cell w="w-[26px]"><S20><path d="M10 3v14M3 10h14" strokeWidth="2" /></S20></Cell>
      <Cell w="w-[26px]"><S20><path d="M3 3h7v7H3z" /><circle cx="14" cy="9" r="3.500" /><path d="M9 12l3 5H6z" /></S20></Cell>
      <Cell w="w-[26px]"><S20 c="#1e90ff"><circle cx="10" cy="10" r="8" fill="#0b5cb0" /><path d="M9 13l5-6" /></S20></Cell>
      <Cell w="w-[24px]"><S20><path d="M4 2h9v9H4z" fill="#c9d6e4" stroke="#456" /><path d="M2 11h13v6H2z" fill="#f4d03a" stroke="none" /><path d="M9 14l3 3 6-8" stroke="#3fae1c" strokeWidth="2.500" /></S20></Cell>
      <Cell w="w-[50px]"><S20 c="#ddd"><path d="M2 4h16v12H2zM11 7h4v4M9 13H5V9M15 7l-4 4M5 13l4-4" /></S20><S20 c="#ddd"><path d="M2 4h16M2 10h16M2 16h16" strokeWidth="2" /></S20></Cell>
    </div>
  </footer>
);

/* ---------- desktop task bar ---------- */
const APPS = [
  ["Chrome", <><circle cx="12" cy="12" r="11" fill="#db4437" /><path d="M2 7a11 11 0 0 0 9 16l5-9-9-1z" fill="#0f9d58" /><path d="M12 7h10a11 11 0 0 1-11 16l5-9z" fill="#ffcd40" /><circle cx="12" cy="12" r="5.500" fill="#fff" /><circle cx="12" cy="12" r="4.300" fill="#4285f4" /></>],
  ["Visual Studio", <><path d="M1 3l17-3 5 2v20l-5 2L1 21z" fill="#68217a" /><path d="M4.500 8v8l4-4zM17 6.500v11L10 12zM4.500 8L17 17.500M4.500 16L17 6.500" fill="none" stroke="#fff" strokeWidth="2" /></>],
  ["文件资源管理器", <><path d="M1 2h9l2 3h11v16H1z" fill="#f5cf63" /><path d="M2 7h20v13H2z" fill="#fbe39a" /><path d="M5 22v-9h14v9h-4v-4H9v4z" fill="#29abe2" /></>],
  ["AutoCAD", <><path d="M0 0h24v24H0z" fill="#e8595b" /><path d="M0 0h24v9L0 15z" fill="#f7d5d3" /><path d="M12 4l8 16h-4l-2-3h-4l-2 3H4z" fill="#9c1216" /></>],
];
const QQ = ({ c }) => <Svg s={18}><ellipse cx="9" cy="6" rx="5" ry="5.500" fill="#111" /><ellipse cx="9" cy="12" rx="6" ry="5" fill="#fff" stroke="#111" /><path d="M3 9q6 4 12 0v3q-6 3-12 0z" fill="#e33" /><path d="M3 17h5M10 17h5M7 7h4" stroke="#f5a623" strokeWidth="2" /><circle cx="7" cy="4" r="1.600" fill="#fff" /><circle cx="11" cy="4" r="1.600" fill="#fff" />{c && <circle cx="13" cy="13" r="4" fill="#f5b04a" stroke="#a65" />}</Svg>;
const Taskbar = () => (
  <div className="flex h-[40px] shrink-0 items-stretch justify-between bg-[#1c1b18] text-white">
    <div className="flex">
      <button aria-label="开始" className="flex w-[48px] items-center justify-center"><Svg s={16}><path d="M0 2l7-1v6.500H0zM8 1l8-1v7.500H8zM0 8.500h7V15l-7-1zM8 8.500h8V16l-8-1z" fill="#fff" /></Svg></button>
      <input aria-label="搜索" placeholder="搜索 Web 和 Windows" className="w-[344px] bg-[#333] pl-[8px] text-[15px] outline-none placeholder:text-[#9b9b9b]" />
      <button aria-label="任务视图" className="flex w-[49px] items-center justify-center"><svg width="21" height="14" viewBox="0 0 21 14" fill="none" stroke="#fff"><path d="M5.500 .5h10v13h-10zM3 2.500H.5v9H3M18 2.500h2.500v9H18" strokeWidth="1.300" /></svg></button>
      {APPS.map(([n, g], i) => (
        <button key={n} aria-label={n} className={`flex w-[49px] flex-col items-center justify-between pt-[8px] ${i === 3 ? "bg-[#4b4a48]" : "px-[4px]"}`}>
          <Svg s={24}>{g}</Svg><span className="h-[2px] w-full bg-[#76b9ed]" />
        </button>
      ))}
    </div>
    <div className="flex items-center">
      <div className="flex items-center gap-[6px] pr-[10px]">
        <Svg s={18}><path d="M4 12l5-5 5 5" fill="none" stroke="#fff" strokeWidth="1.500" /></Svg>
        <QQ c /><QQ />
        <Svg s={18}><path d="M8 2h2v3h3v3l3 2v6h-4v-5h-2v5H8v-5H6v5H2v-6l3-2V5h3z" fill="#fff" /></Svg>
        <Svg s={18}><path d="M4 3h12v9H7M2 2h4v5H2zM4 7v9h4M12 12v4M9 16h6" fill="none" stroke="#fff" strokeWidth="1.200" /></Svg>
        <Svg s={18}><path d="M1 7h3l4-4v12l-4-4H1zM10 6q2 3 0 6M12.500 4q3.500 5 0 10M15 3q4 6 0 12" fill="none" stroke="#ddd" strokeWidth="1.200" /></Svg>
        <Svg s={18}><path d="M1 1h16v12h-6l-3 4v-4H1z" fill="#fff" /><path d="M4 5h10M4 9h7" stroke="#1c1b18" strokeWidth="1.500" /></Svg>
        <span className="w-[18px] whitespace-nowrap text-center text-[14px] leading-[20px]">英</span>
        <Svg s={18} className="ml-[4px]"><path d="M2 3q0-2 2-2l11-1q2 0 2 2l-1 13q0 2-2 2H4q-2 0-2-2z" fill="#f4511e" /><path d="M13 5q-7-2-7 1 0 2 3 2.500 4 1 3.500 3.500Q12 15 5 13" fill="none" stroke="#fff" strokeWidth="2.200" /></Svg>
      </div>
      <time className="w-[74px] text-center text-[12px] leading-[17px]">11:03<br />2016/6/24</time>
      <span className="mr-[4px] h-full w-px bg-[#555]" />
    </div>
  </div>
);

export default function App() {
  return (
    <div className="relative flex h-screen min-h-[900px] flex-col overflow-hidden bg-[#5b5b5b] font-['Noto_Sans','Noto_Sans_CJK_SC',sans-serif]">
      <PaleDefs />
      <Title />
      <RibbonTabs />
      <AppButton />
      <Ribbon />
      <DocTabs />
      <div className="flex min-h-0 flex-1">
        <ToolPanel />
        <PropPanel />
        <VTabs />
        <CanvasArea />
      </div>
      <Status />
      <Taskbar />
    </div>
  );
}
